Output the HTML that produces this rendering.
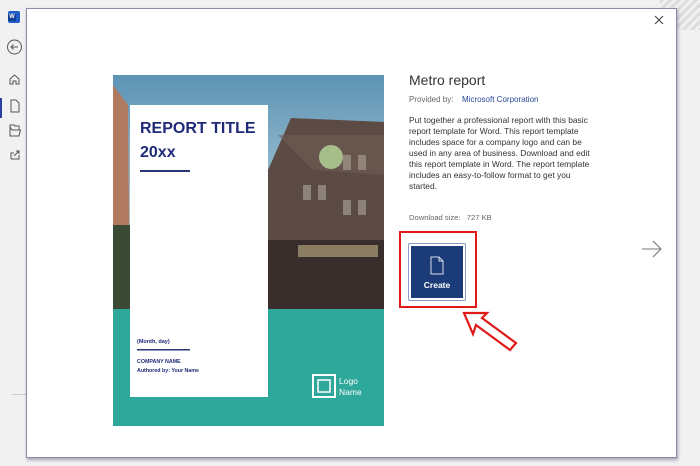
<!DOCTYPE html>
<html><head><meta charset="utf-8"><style>
*{margin:0;padding:0;box-sizing:border-box}
body{width:700px;height:466px;overflow:hidden;background:#f1f1f1;font-family:"Liberation Sans",sans-serif;position:relative}
.abs{position:absolute}
.dlg{left:26px;top:8px;width:651px;height:450px;background:#fff;border:1px solid #8c8aa8;box-shadow:1px 2px 3px rgba(90,90,130,.5)}
.t{color:#444}
</style></head><body>
<div class="abs" style="left:8px;top:11px;width:12px;height:12px;background:#1e5bc6;border-radius:2px"></div>
<div class="abs" style="left:8px;top:14px;width:8px;height:7px;background:#103f91;color:#fff;font-size:6px;line-height:7px;text-align:center;font-weight:bold">W</div>
<svg class="abs" style="left:0;top:30px" width="26" height="150" fill="none" stroke="#555" stroke-width="1">
<circle cx="14.5" cy="17" r="7"/><path d="M18 17H11M13.5 14.5L11 17l2.5 2.5"/>
<path d="M10 54v-5l4.5-4 4.5 4v5h-3v-3h-3v3z"/>
<path d="M11 70h5l3 3v9h-8z"/>
<path d="M10 97v9h9l1.5-6H12z M10 97v-2h4l1 1h4v4"/>
<path d="M11 129v-6h3 M11 129h8v-4 M14 126l5-5 M16 121h3v3"/>
</svg>
<div class="abs" style="left:0;top:98px;width:2px;height:20px;background:#2b3fa0"></div>
<div class="abs" style="left:12px;top:394px;width:14px;height:1px;background:#ccc"></div>
<div class="abs" style="left:660px;top:0;width:40px;height:30px;background:repeating-linear-gradient(135deg,#ddd 0 3px,#f1f1f1 3px 6px)"></div>
<div class="dlg abs"></div>
<svg class="abs" style="left:653px;top:14px" width="12" height="12" stroke="#444" stroke-width="1.1"><path d="M2 2l8 8M10 2l-8 8"/></svg>
<svg class="abs" style="left:113px;top:75px" width="271" height="351">
<defs><linearGradient id="sky" x1="0" y1="0" x2="0" y2="1"><stop offset="0" stop-color="#5d93b4"/><stop offset=".5" stop-color="#9cc0d1"/><stop offset="1" stop-color="#c6d5da"/></linearGradient></defs>
<rect width="271" height="235" fill="url(#sky)"/>
<polygon points="0,10 15,30 17,235 0,235" fill="#b07a60"/>
<rect x="0" y="150" width="17" height="85" fill="#3b4a35"/>
<polygon points="155,95 178,43 271,47 271,235 155,235" fill="#5c4a44"/>
<polygon points="165,60 271,60 271,100 200,95" fill="#6e5d55" opacity=".6"/>
<rect x="155" y="165" width="116" height="70" fill="#3a2e2c"/>
<rect x="185" y="170" width="80" height="12" fill="#8a7d62"/>
<g fill="#a39a8f" opacity=".7"><rect x="190" y="110" width="8" height="15"/><rect x="205" y="110" width="8" height="15"/><rect x="230" y="80" width="8" height="15"/><rect x="245" y="80" width="8" height="15"/><rect x="230" y="125" width="8" height="15"/><rect x="245" y="125" width="8" height="15"/></g>
<circle cx="218" cy="82" r="12" fill="#b8d79a" opacity=".8"/>
<rect x="0" y="234" width="271" height="117" fill="#2fa89c"/>
<rect x="17" y="30" width="138" height="292" fill="#fff"/>
<rect x="27" y="95" width="50" height="2" fill="#2a3577"/>
<rect x="24" y="274" width="53" height="1.5" fill="#2a3577"/>
<rect x="200" y="300" width="22" height="22" fill="none" stroke="#fff" stroke-width="2"/>
<rect x="205" y="305" width="12" height="12" fill="none" stroke="#fff" stroke-width="1.5"/>
</svg>
<div class="abs" style="left:140px;top:117px;color:#1e2a78;font-weight:bold;font-size:16px;line-height:24px">REPORT TITLE<br>20xx</div>
<div class="abs" style="left:137px;top:339px;color:#1e2a78;font-size:5.5px;font-weight:bold">(Month, day)</div>
<div class="abs" style="left:137px;top:358px;color:#1e2a78;font-size:5.3px;font-weight:bold;line-height:9px">COMPANY NAME<br>Authored by: Your Name</div>
<div class="abs" style="left:339px;top:376px;color:#fff;font-size:8.5px;line-height:11px">Logo<br>Name</div>
<div class="abs t" style="left:409px;top:72px;font-size:14px;color:#333">Metro report</div>
<div class="abs" style="left:409px;top:95px;font-size:8px;color:#666">Provided by:</div>
<div class="abs" style="left:462px;top:95px;font-size:8px;color:#2a4a9a">Microsoft Corporation</div>
<div class="abs" style="left:409px;top:115px;width:220px;font-size:8.4px;line-height:11px;color:#333;white-space:nowrap">Put together a professional report with this basic<br>report template for Word. This report template<br>includes space for a company logo and can be<br>used in any area of business. Download and edit<br>this report template in Word. The report template<br>includes an easy-to-follow format to get you<br>started.</div>
<div class="abs" style="left:409px;top:213px;font-size:7.6px;color:#666">Download size:&nbsp;&nbsp;&nbsp;727 KB</div>
<div class="abs" style="left:399px;top:231px;width:78px;height:77px;border:2.5px solid #e01919"></div>
<div class="abs" style="left:408px;top:243px;width:58px;height:58px;border:1px solid #8a9ad0;border-radius:2px;padding:2px"><div style="width:100%;height:100%;background:#1b3b78;position:relative"><svg class="abs" style="left:18px;top:10px" width="16" height="20" fill="none" stroke="#d9def0" stroke-width="1"><path d="M2 1h8l4 4v13H2z M10 1v4h4"/></svg><div class="abs" style="left:0;right:0;top:34px;text-align:center;color:#fff;font-size:8.5px;font-weight:bold">Create</div></div></div>
<svg class="abs" style="left:455px;top:305px" width="70" height="50"><path d="M9 8L32 8L27 13L61 38L55 45L21 20L18 29Z" fill="#fff" stroke="#e01919" stroke-width="2.2" stroke-linejoin="miter"/></svg>
<svg class="abs" style="left:640px;top:238px" width="24" height="22" fill="none" stroke="#777" stroke-width="1.1"><path d="M2 11h19M13 3l8 8-8 8"/></svg>
</body></html>
